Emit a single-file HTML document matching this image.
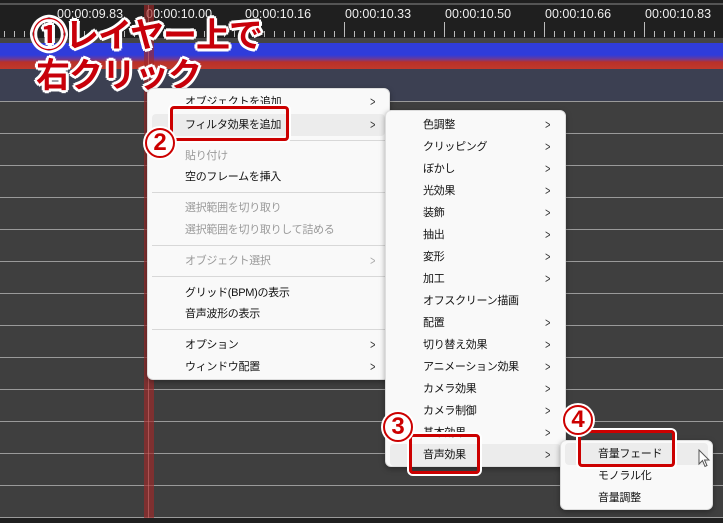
<!DOCTYPE html>
<html><head><meta charset="utf-8">
<style>
*{margin:0;padding:0;box-sizing:border-box}
body{width:723px;height:523px;overflow:hidden;background:#1f1f1f;position:relative;font-family:"Liberation Sans","Noto Sans CJK JP",sans-serif}
.abs{position:absolute}
.lbl{position:absolute;top:7px;color:#eee;font-size:12.5px}
.menu{position:absolute;background:#f9f9f9;border:1px solid #ddd;border-radius:6px;box-shadow:0 2px 6px rgba(0,0,0,.35)}
.it{position:absolute;left:0;right:0;height:22px;font-size:11px;letter-spacing:-0.3px;color:#111;line-height:22px}
.it.dis{color:#9a9a9a}
.it .ar{position:absolute;top:0;font-size:13px;color:#333;transform:scaleX(.7)}
.it.hl{background:#ececec;border-radius:4px;left:4px;right:4px}
.sep{position:absolute;left:4px;right:4px;height:1px;background:#d8d8d8}
.box{position:absolute;border:3px solid #c00;border-radius:4px;box-shadow:0 0 0 2px #fff}
.num{position:absolute;width:30px;height:30px;border-radius:50%;border:2px solid #c00;background:#fff;color:#c00;font-size:24px;font-weight:bold;text-align:center;line-height:26px;box-shadow:0 0 0 2px #fff}
.big{position:absolute;color:#c8000a;font-size:34px;font-weight:bold;text-shadow:2px 0 #fff,-2px 0 #fff,0 2px #fff,0 -2px #fff,2px 2px #fff,-2px -2px #fff,2px -2px #fff,-2px 2px #fff,3px 0 #fff,-3px 0 #fff,0 3px #fff,0 -3px #fff;letter-spacing:-1px}
</style></head><body>
<div class="abs" style="left:0;top:3px;width:723px;height:2px;background:#555"></div>
<div class="lbl" style="left:57px">00:00:09.83</div>
<div class="lbl" style="left:146px">00:00:10.00</div>
<div class="lbl" style="left:245px">00:00:10.16</div>
<div class="lbl" style="left:345px">00:00:10.33</div>
<div class="lbl" style="left:445px">00:00:10.50</div>
<div class="lbl" style="left:545px">00:00:10.66</div>
<div class="lbl" style="left:645px">00:00:10.83</div>
<svg class="abs" style="left:0;top:20px" width="723" height="18">
<g stroke="#bbb" stroke-width="1">
<path d="M4.5 11V17M14.5 11V17M24.5 11V17M34.5 11V17M44.5 11V17M54.5 11V17M64.5 11V17M74.5 11V17M84.5 11V17M94.5 11V17M104.5 11V17M114.5 11V17M124.5 11V17M134.5 11V17M154.5 11V17M164.5 11V17M174.5 11V17M184.5 11V17M194.5 11V17M204.5 11V17M214.5 11V17M224.5 11V17M234.5 11V17M254.5 11V17M264.5 11V17M274.5 11V17M284.5 11V17M294.5 11V17M304.5 11V17M314.5 11V17M324.5 11V17M334.5 11V17M354.5 11V17M364.5 11V17M374.5 11V17M384.5 11V17M394.5 11V17M404.5 11V17M414.5 11V17M424.5 11V17M434.5 11V17M454.5 11V17M464.5 11V17M474.5 11V17M484.5 11V17M494.5 11V17M504.5 11V17M514.5 11V17M524.5 11V17M534.5 11V17M554.5 11V17M564.5 11V17M574.5 11V17M584.5 11V17M594.5 11V17M604.5 11V17M614.5 11V17M624.5 11V17M634.5 11V17M654.5 11V17M664.5 11V17M674.5 11V17M684.5 11V17M694.5 11V17M704.5 11V17M714.5 11V17"/>
<path d="M144.5 2V17M244.5 2V17M344.5 2V17M444.5 2V17M544.5 2V17M644.5 2V17M44.5 2V17"/>
</g></svg>
<div class="abs" style="left:0;top:38px;width:723px;height:5px;background:#444"></div>
<div class="abs" style="left:0;top:43px;width:723px;height:26px;background:linear-gradient(#2f3cdb 0,#2f3cdb 12px,#6b3a9a 16px,#b8302a 19px,#c0392b 26px)"></div>
<div class="abs" style="left:0;top:69px;width:723px;height:32px;background:#3c4052"></div>
<div class="abs" style="left:0;top:101px;width:723px;height:417px;background:#3f3f3f;background-image:repeating-linear-gradient(#9a9a9a 0,#9a9a9a 1px,transparent 1px,transparent 32px)"></div>
<div class="abs" style="left:0;top:518px;width:723px;height:5px;background:#1f1f1f"></div>
<div class="abs" style="left:144px;top:5px;width:10px;height:513px;background:rgba(160,40,40,.65)"></div>
<div class="abs" style="left:148px;top:5px;width:1px;height:513px;background:rgba(220,120,120,.5)"></div>

<div class="big" style="left:32px;top:8px">①レイヤー上で</div>
<div class="big" style="left:36px;top:48px">右クリック</div>

<div class="menu" style="left:147px;top:88px;width:243px;height:292px">
<div class="it" style="top:2px"><span style="position:absolute;left:37px">オブジェクトを追加</span><span class="ar" style="left:221px">&gt;</span></div>
<div class="it hl" style="top:25px"><span style="position:absolute;left:33px">フィルタ効果を追加</span><span class="ar" style="left:217px">&gt;</span></div>
<div class="sep" style="top:51px"></div>
<div class="it dis" style="top:56px"><span style="position:absolute;left:37px">貼り付け</span></div>
<div class="it" style="top:77px"><span style="position:absolute;left:37px">空のフレームを挿入</span></div>
<div class="sep" style="top:103px"></div>
<div class="it dis" style="top:108px"><span style="position:absolute;left:37px">選択範囲を切り取り</span></div>
<div class="it dis" style="top:130px"><span style="position:absolute;left:37px">選択範囲を切り取りして詰める</span></div>
<div class="sep" style="top:156px"></div>
<div class="it dis" style="top:161px"><span style="position:absolute;left:37px">オブジェクト選択</span><span class="ar" style="left:221px;color:#aaa">&gt;</span></div>
<div class="sep" style="top:187px"></div>
<div class="it" style="top:193px"><span style="position:absolute;left:37px">グリッド(BPM)の表示</span></div>
<div class="it" style="top:214px"><span style="position:absolute;left:37px">音声波形の表示</span></div>
<div class="sep" style="top:240px"></div>
<div class="it" style="top:245px"><span style="position:absolute;left:37px">オプション</span><span class="ar" style="left:221px">&gt;</span></div>
<div class="it" style="top:267px"><span style="position:absolute;left:37px">ウィンドウ配置</span><span class="ar" style="left:221px">&gt;</span></div>
</div>

<div class="menu" style="left:385px;top:110px;width:181px;height:357px">
<div class="it" style="top:3px"><span style="position:absolute;left:37px">色調整</span><span class="ar" style="left:158px">&gt;</span></div>
<div class="it" style="top:25px"><span style="position:absolute;left:37px">クリッピング</span><span class="ar" style="left:158px">&gt;</span></div>
<div class="it" style="top:47px"><span style="position:absolute;left:37px">ぼかし</span><span class="ar" style="left:158px">&gt;</span></div>
<div class="it" style="top:69px"><span style="position:absolute;left:37px">光効果</span><span class="ar" style="left:158px">&gt;</span></div>
<div class="it" style="top:91px"><span style="position:absolute;left:37px">装飾</span><span class="ar" style="left:158px">&gt;</span></div>
<div class="it" style="top:113px"><span style="position:absolute;left:37px">抽出</span><span class="ar" style="left:158px">&gt;</span></div>
<div class="it" style="top:135px"><span style="position:absolute;left:37px">変形</span><span class="ar" style="left:158px">&gt;</span></div>
<div class="it" style="top:157px"><span style="position:absolute;left:37px">加工</span><span class="ar" style="left:158px">&gt;</span></div>
<div class="it" style="top:179px"><span style="position:absolute;left:37px">オフスクリーン描画</span></div>
<div class="it" style="top:201px"><span style="position:absolute;left:37px">配置</span><span class="ar" style="left:158px">&gt;</span></div>
<div class="it" style="top:223px"><span style="position:absolute;left:37px">切り替え効果</span><span class="ar" style="left:158px">&gt;</span></div>
<div class="it" style="top:245px"><span style="position:absolute;left:37px">アニメーション効果</span><span class="ar" style="left:158px">&gt;</span></div>
<div class="it" style="top:267px"><span style="position:absolute;left:37px">カメラ効果</span><span class="ar" style="left:158px">&gt;</span></div>
<div class="it" style="top:289px"><span style="position:absolute;left:37px">カメラ制御</span><span class="ar" style="left:158px">&gt;</span></div>
<div class="it" style="top:311px"><span style="position:absolute;left:37px">基本効果</span><span class="ar" style="left:158px">&gt;</span></div>
<div class="it hl" style="top:333px"><span style="position:absolute;left:33px">音声効果</span><span class="ar" style="left:154px">&gt;</span></div>
</div>

<div class="menu" style="left:560px;top:440px;width:153px;height:70px">
<div class="it hl" style="top:2px"><span style="position:absolute;left:33px">音量フェード</span></div>
<div class="it" style="top:24px"><span style="position:absolute;left:37px">モノラル化</span></div>
<div class="it" style="top:46px"><span style="position:absolute;left:37px">音量調整</span></div>
</div>
<svg class="abs" style="left:698px;top:449px" width="14" height="20"><path d="M1 1V15L4.5 11.5L7 17.5L9 16.5L6.5 11H11Z" fill="#fff" stroke="#555" stroke-width="1"/></svg>

<div class="box" style="left:170px;top:106px;width:119px;height:35px"></div>
<div class="box" style="left:409px;top:434px;width:71px;height:40px"></div>
<div class="box" style="left:578px;top:430px;width:97px;height:37px"></div>
<div class="num" style="left:145px;top:128px">2</div>
<div class="num" style="left:383px;top:412px">3</div>
<div class="num" style="left:563px;top:405px">4</div>
</body></html>
